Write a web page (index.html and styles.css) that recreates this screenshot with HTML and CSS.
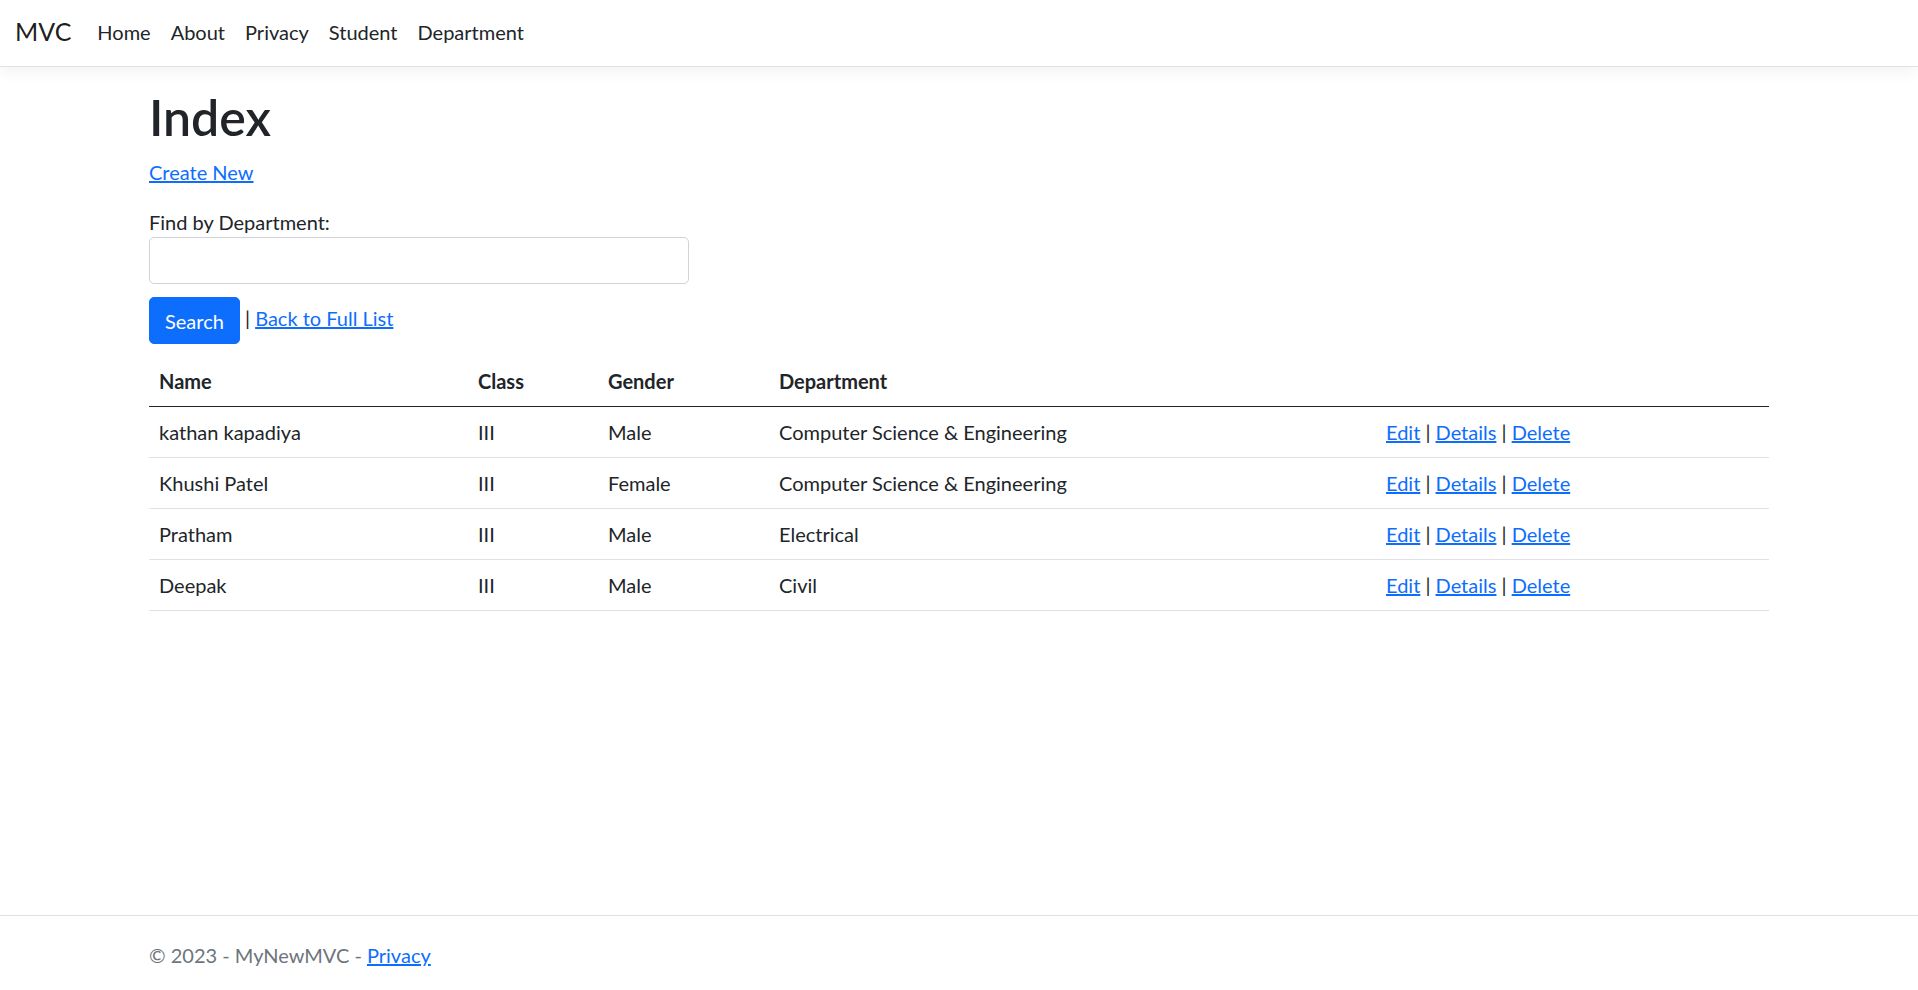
FILE: index.html
```html
<!DOCTYPE html>
<html lang="en">
<head>
<meta charset="utf-8">
<title>Index - MyNewMVC</title>
<link rel="stylesheet" href="styles.css">
</head>
<body>
<header>
  <nav class="navbar">
    <div class="navbar-inner">
      <a class="brand" href="#">MVC</a>
      <ul class="nav">
        <li><a class="nav-link" href="#">Home</a></li>
        <li><a class="nav-link" href="#">About</a></li>
        <li><a class="nav-link" href="#">Privacy</a></li>
        <li><a class="nav-link" href="#">Student</a></li>
        <li><a class="nav-link" href="#">Department</a></li>
      </ul>
    </div>
  </nav>
</header>

<div class="container page">
  <main class="main">
    <h1 class="title">Index</h1>
    <p class="create"><a href="#">Create New</a></p>

    <form class="search" action="#" method="get">
      <label class="search-label" for="q">Find by Department:</label>
      <input class="form-control" id="q" type="text">
      <div class="search-actions">
        <button class="btn" type="submit">Search</button> | <a href="#">Back to Full List</a>
      </div>
    </form>

    <table class="table">
      <colgroup>
        <col class="c-name">
        <col class="c-class">
        <col class="c-gender">
        <col class="c-dept">
        <col class="c-act">
      </colgroup>
      <thead>
        <tr>
          <th>Name</th>
          <th>Class</th>
          <th>Gender</th>
          <th>Department</th>
          <th></th>
        </tr>
      </thead>
      <tbody>
        <tr>
          <td>kathan kapadiya</td>
          <td>III</td>
          <td>Male</td>
          <td>Computer Science &amp; Engineering</td>
          <td><a href="#">Edit</a> | <a href="#">Details</a> | <a href="#">Delete</a></td>
        </tr>
        <tr>
          <td>Khushi Patel</td>
          <td>III</td>
          <td>Female</td>
          <td>Computer Science &amp; Engineering</td>
          <td><a href="#">Edit</a> | <a href="#">Details</a> | <a href="#">Delete</a></td>
        </tr>
        <tr>
          <td>Pratham</td>
          <td>III</td>
          <td>Male</td>
          <td>Electrical</td>
          <td><a href="#">Edit</a> | <a href="#">Details</a> | <a href="#">Delete</a></td>
        </tr>
        <tr>
          <td>Deepak</td>
          <td>III</td>
          <td>Male</td>
          <td>Civil</td>
          <td><a href="#">Edit</a> | <a href="#">Details</a> | <a href="#">Delete</a></td>
        </tr>
      </tbody>
    </table>
  </main>
</div>

<footer class="footer">
  <div class="container">
    &copy; 2023 - MyNewMVC - <a href="#">Privacy</a>
  </div>
</footer>
</body>
</html>
```
FILE: styles.css
```css
*, *::before, *::after { box-sizing: border-box; }

html, body { height: 100%; }

body {
  margin: 0;
  display: flex;
  flex-direction: column;
  min-height: 100vh;
  font-family: Lato, "Open Sans", sans-serif;
  font-size: 20px;
  font-weight: 400;
  line-height: 1.5;
  color: #212529;
  background: #fff;
}

a { color: #0d6efd; text-decoration: underline; }

/* navbar */
.navbar {
  background: #fff;
  border-bottom: 1px solid #dee2e6;
  box-shadow: 0 5px 15px rgba(0, 0, 0, 0.05);
  padding: 7px 0 9px;
  margin-bottom: 20px;
}
.navbar-inner {
  display: flex;
  align-items: center;
  padding: 0 15px;
}
.brand {
  color: rgba(0, 0, 0, 0.9);
  text-decoration: none;
  font-size: 25px;
  line-height: 37.5px;
  padding: 6.25px 0;
  margin-right: 16px;
  white-space: nowrap;
}
.nav {
  display: flex;
  list-style: none;
  margin: 0;
  padding: 0;
}
.nav-link {
  display: block;
  padding: 10px;
  color: #212529;
  text-decoration: none;
}

/* container */
.container {
  width: 100%;
  max-width: 1650px;
  margin: 0 auto;
  padding: 0 15px;
}
.page { flex: 1 0 auto; }

.title {
  margin: 0 0 10px;
  font-size: 50px;
  font-weight: 600;
  line-height: 1.2;
}
.create { margin: 0 0 20px; }

/* search form */
.search { display: flex; flex-direction: column; align-items: flex-start; }
.search-label { display: block; }
.form-control {
  display: block;
  width: 540px;
  height: 47px;
  padding: 7.5px 15px;
  font: inherit;
  color: #212529;
  background: #fff;
  border: 1px solid #ced4da;
  border-radius: 5px;
  outline: none;
}
.search-actions { margin-top: 13px; }
.btn {
  display: inline-block;
  height: 47px;
  padding: 7.5px 15px;
  font: inherit;
  line-height: 30px;
  color: #fff;
  background: #0d6efd;
  border: 1px solid #0d6efd;
  border-radius: 5px;
  vertical-align: middle;
  cursor: pointer;
}

/* table */
.table {
  width: 100%;
  margin: 12px 0 20px;
  border-collapse: collapse;
  table-layout: fixed;
  color: #212529;
}
.c-name { width: 319px; }
.c-class { width: 130px; }
.c-gender { width: 171px; }
.c-dept { width: 607px; }
.table th,
.table td {
  padding: 10px;
  text-align: left;
  border-bottom: 1px solid #dee2e6;
  white-space: nowrap;
}
.table th { font-weight: 700; vertical-align: bottom; }
.table thead th { border-bottom: 1px solid #212529; }

/* footer */
.footer {
  flex-shrink: 0;
  border-top: 1px solid #dee2e6;
  color: #6c757d;
  padding-top: 5px;
  line-height: 69px;
  white-space: nowrap;
}
```
